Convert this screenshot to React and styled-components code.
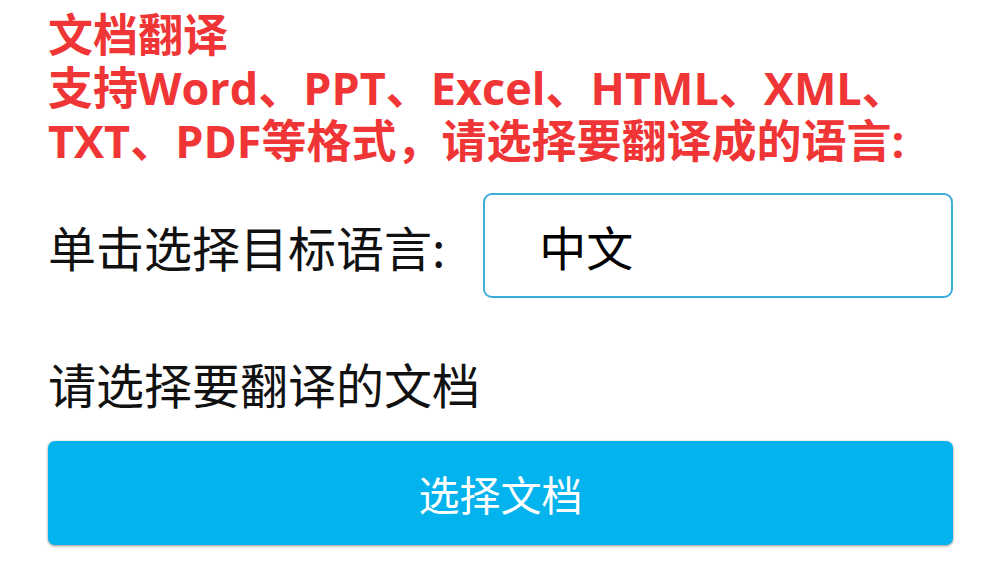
import React from "react";
import styled, { createGlobalStyle } from "styled-components";

const GlobalStyle = createGlobalStyle`
  html, body {
    margin: 0;
    padding: 0;
    background: #ffffff;
  }
  body {
    font-family: "Noto Sans CJK SC", sans-serif;
  }
`;

const Page = styled.div`
  width: 1000px;
  height: 581px;
  box-sizing: border-box;
  padding: 8px 47px 0 48px;
  display: flex;
  flex-direction: column;
  overflow: hidden;
`;

const Notice = styled.div`
  color: #ef3535;
  font-family: "Open Sans", "Noto Sans CJK SC", sans-serif;
  font-weight: 700;
  font-size: 45px;
  line-height: 53px;
`;

const Row = styled.div`
  display: flex;
  align-items: center;
  margin-top: 26px;
`;

const Label = styled.div`
  color: #111111;
  font-size: 48px;
  line-height: 54px;
  margin-top: ${(p) => p.$top || 0}px;
`;

const Picker = styled.div`
  flex: 1;
  margin-left: 38px;
  height: 105px;
  box-sizing: border-box;
  border: 2px solid #3badd8;
  border-radius: 9px;
  display: flex;
  align-items: center;
  padding-left: 54px;
  font-size: 47px;
  color: #000000;
`;

const Button = styled.button`
  margin-top: 31px;
  height: 104px;
  width: 100%;
  border: none;
  border-radius: 7px;
  background: #02b3ed;
  color: #ffffff;
  font-family: "Noto Sans CJK SC", sans-serif;
  font-size: 41px;
  box-shadow: 0 1px 3px rgba(0, 0, 0, 0.45);
  cursor: pointer;
`;

export default function App() {
  return (
    <>
      <GlobalStyle />
      <Page>
        <Notice>
          文档翻译
          <br />
          支持Word、PPT、Excel、HTML、XML、
          <br />
          TXT、PDF等格式，请选择要翻译成的语言:
        </Notice>
        <Row>
          <Label>单击选择目标语言:</Label>
          <Picker>中文</Picker>
        </Row>
        <Label $top={58}>请选择要翻译的文档</Label>
        <Button>选择文档</Button>
      </Page>
    </>
  );
}
